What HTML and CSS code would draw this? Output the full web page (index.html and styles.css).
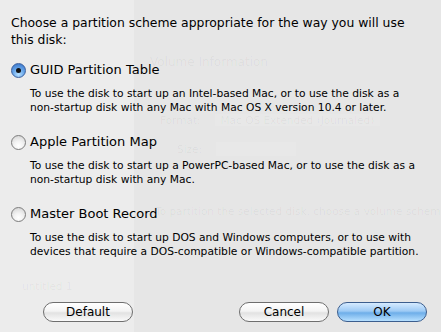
FILE: index.html
```html
<!DOCTYPE html>
<html lang="en">
<head>
  <meta charset="UTF-8">
  <title>Partition Options</title>
  <link rel="stylesheet" href="styles.css">
</head>
<body>

<div class="ghost">
  <div class="ghost-title">Volume Information</div>
  <div class="ghost-format"><span>Format:</span><span class="ghost-box">Mac OS Extended (Journaled)</span></div>
  <div class="ghost-size"><span>Size:</span><span class="ghost-box small"></span></div>
  <div class="ghost-note">To partition the selected disk, choose a volume scheme</div>
  <div class="ghost-vol">untitled 1</div>
</div>

<main class="sheet">
  <p class="prompt">Choose a partition scheme appropriate for the way you will use<br>this disk:</p>

  <div class="options">
    <label class="option">
      <span class="radio checked"></span>
      <span class="title">GUID Partition Table</span>
      <span class="desc">To use the disk to start up an Intel-based Mac, or to use the disk as a<br>non-startup disk with any Mac with Mac OS X version 10.4 or later.</span>
    </label>

    <label class="option">
      <span class="radio"></span>
      <span class="title">Apple Partition Map</span>
      <span class="desc">To use the disk to start up a PowerPC-based Mac, or to use the disk as a<br>non-startup disk with any Mac.</span>
    </label>

    <label class="option">
      <span class="radio"></span>
      <span class="title">Master Boot Record</span>
      <span class="desc">To use the disk to start up DOS and Windows computers, or to use with<br>devices that require a DOS-compatible or Windows-compatible partition.</span>
    </label>
  </div>

  <div class="buttons">
    <button class="btn">Default</button>
    <div class="right">
      <button class="btn">Cancel</button>
      <button class="btn btn-ok">OK</button>
    </div>
  </div>
</main>

</body>
</html>
```

FILE: styles.css
```css
* {
  box-sizing: border-box;
  margin: 0;
  padding: 0;
}

body {
  width: 441px;
  height: 332px;
  overflow: hidden;
  position: relative;
  font-family: "DejaVu Sans", "Lucida Grande", sans-serif;
  color: #000;
  background: linear-gradient(to right, #ececec 0, #ececec 134px, #e6e6e6 134px);
}

/* faint window content behind the sheet */
.ghost {
  position: absolute;
  top: 0;
  left: 0;
  width: 441px;
  height: 332px;
  overflow: hidden;
  color: rgba(0, 0, 0, 0.045);
  font-size: 10.5px;
  line-height: 12px;
  white-space: nowrap;
}

.ghost-title {
  position: absolute;
  left: 150px;
  top: 56px;
  font-size: 12px;
  line-height: 13px;
}

.ghost-format,
.ghost-size {
  position: absolute;
  display: flex;
  align-items: center;
  gap: 14px;
}

.ghost-format {
  left: 160px;
  top: 114px;
}

.ghost-size {
  left: 177px;
  top: 142px;
}

.ghost-box {
  background: rgba(255, 255, 255, 0.1);
  padding: 0 6px;
}

.ghost-box.small {
  width: 80px;
  height: 14px;
}

.ghost-note {
  position: absolute;
  left: 155px;
  top: 205px;
}

.ghost-vol {
  position: absolute;
  left: 22px;
  top: 280px;
}

.sheet {
  position: relative;
  display: flex;
  flex-direction: column;
  height: 100%;
  padding: 14px 10px 10px 11px;
}

.prompt {
  font-size: 12.4px;
  line-height: 17px;
  white-space: nowrap;
}

.options {
  display: flex;
  flex-direction: column;
  gap: 18px;
  margin-top: 13px;
}

.option {
  display: grid;
  grid-template-columns: 19px 1fr;
  row-gap: 8px;
  align-items: center;
}

.title {
  font-size: 13px;
  line-height: 18px;
}

.desc {
  grid-column: 2;
  font-size: 10.7px;
  line-height: 14px;
  white-space: nowrap;
}

.radio {
  width: 15px;
  height: 15px;
  border-radius: 50%;
  border: 1px solid #7c7c7c;
  background: radial-gradient(circle at 50% 75%, #ffffff 0, #f2f2f2 40%, #cfcfcf 100%);
  position: relative;
}

.radio.checked {
  border-color: #3a5f9e;
  background: radial-gradient(circle at 50% 80%, #b8e0ff 0, #6aa8ea 45%, #2f6cc4 100%);
}

.radio.checked::after {
  content: "";
  position: absolute;
  left: 4px;
  top: 4px;
  width: 5px;
  height: 5px;
  border-radius: 50%;
  background: #111;
}

.buttons {
  margin-top: auto;
  display: flex;
  justify-content: space-between;
  align-items: center;
  padding: 0 4px 0 32px;
}

.right {
  display: flex;
  gap: 8px;
}

.btn {
  width: 90px;
  height: 20px;
  border-radius: 10px;
  border: 1px solid #6e6e6e;
  background: linear-gradient(to bottom, #ffffff 0, #f4f4f4 45%, #e2e2e2 55%, #fafafa 100%);
  font-family: "DejaVu Sans", sans-serif;
  font-size: 12px;
  color: #000;
}

.btn-ok {
  border-color: #3c5e8e;
  background: linear-gradient(to bottom, #d6ebff 0, #9dcaf5 45%, #6eaee9 55%, #b7e0ff 100%);
}
```
